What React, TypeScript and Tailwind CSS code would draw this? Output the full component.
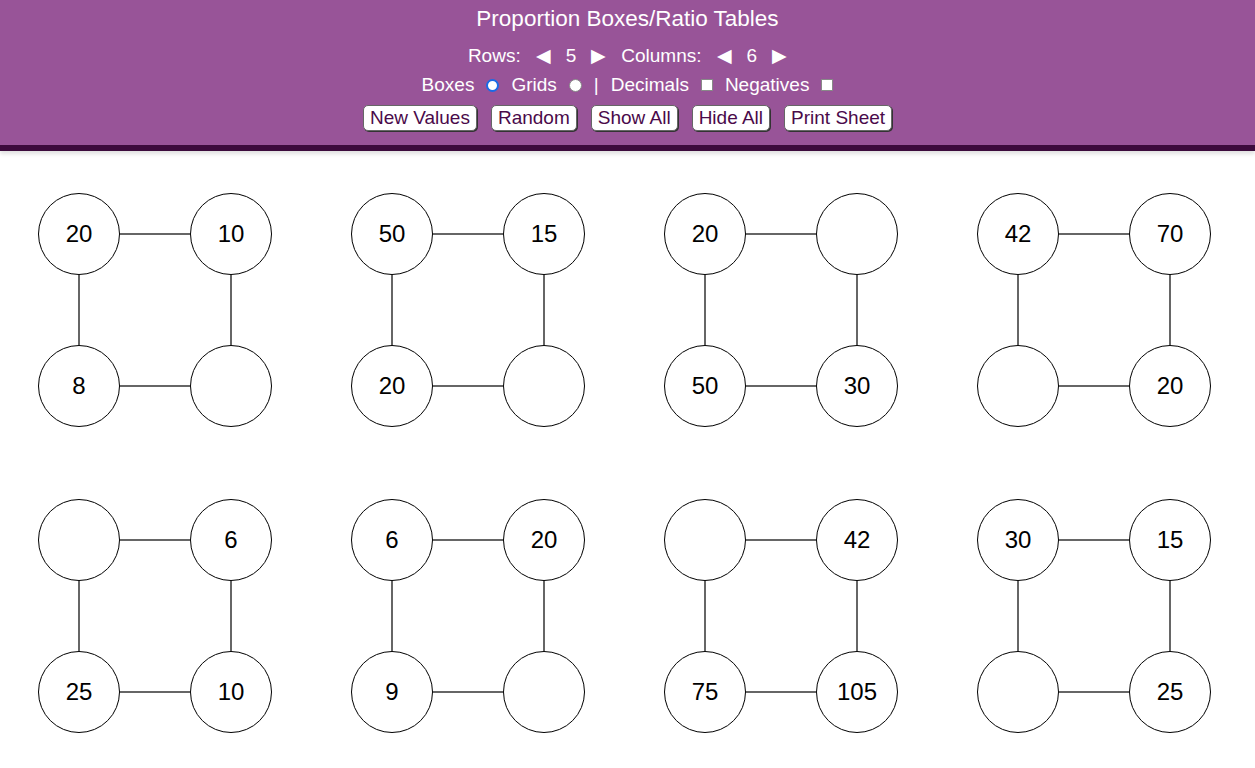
import React from 'react';

type Val = number | '';

const boxes: Val[][] = [
  [20, 10, 8, ''],
  [50, 15, 20, ''],
  [20, '', 50, 30],
  [42, 70, '', 20],
  ['', 6, 25, 10],
  [6, 20, 9, ''],
  ['', 42, 75, 105],
  [30, 15, '', 25],
];

const Circle = ({ v }: { v: Val }) => (
  <div className="w-[82px] h-[82px] rounded-full border border-black bg-white flex items-center justify-center text-[24px] text-black">
    {v}
  </div>
);

const HLine = () => (
  <div className="flex items-center">
    <div className="w-full h-[1.5px] bg-[#666]" />
  </div>
);

const VLine = () => (
  <div className="flex justify-center">
    <div className="h-full w-[1.5px] bg-[#666]" />
  </div>
);

const ProportionBox = ({ vals }: { vals: Val[] }) => (
  <div className="grid grid-cols-[82px_70px_82px] grid-rows-[82px_70px_82px]">
    <Circle v={vals[0]} />
    <HLine />
    <Circle v={vals[1]} />
    <VLine />
    <div />
    <VLine />
    <Circle v={vals[2]} />
    <HLine />
    <Circle v={vals[3]} />
  </div>
);

const Btn = ({ label }: { label: string }) => (
  <button className="h-[26px] px-[6px] bg-white rounded-[5px] border border-[#666] shadow-[1px_1px_0_#333] text-[#4a0a4a] text-[19px] leading-[22px]">
    {label}
  </button>
);

const App = () => {
  return (
    <div className="min-h-screen bg-white" style={{ fontFamily: '"Liberation Sans", Arial, sans-serif' }}>
      {/* Header / controls */}
      <div className="bg-[#985498] border-b-[6px] border-[#3c0b3c] shadow-[0_3px_4px_rgba(0,0,0,0.12)] text-white text-center pb-[14px]">
        <div className="pt-[6px] leading-[26px] text-[22.5px]">Proportion Boxes/Ratio Tables</div>
        <div className="mt-[10px] leading-[28px] text-[19px] flex justify-center items-center gap-[15px]">
          <span>Rows:</span>
          <span className="text-[19px]">◀</span>
          <span>5</span>
          <span className="text-[19px]">▶</span>
          <span>Columns:</span>
          <span className="text-[19px]">◀</span>
          <span>6</span>
          <span className="text-[19px]">▶</span>
        </div>
        <div className="mt-[1px] leading-[28px] text-[19px] flex justify-center items-center gap-[12px]">
          <span>Boxes</span>
          <span className="w-[13px] h-[13px] rounded-full border-[2px] border-[#1a6be6] bg-white" />
          <span>Grids</span>
          <span className="w-[13px] h-[13px] rounded-full border border-[#888] bg-white" />
          <span>|</span>
          <span>Decimals</span>
          <span className="w-[12px] h-[12px] border border-[#888] bg-white" />
          <span>Negatives</span>
          <span className="w-[12px] h-[12px] border border-[#888] bg-white" />
        </div>
        <div className="mt-[6px] flex justify-center gap-[14px]">
          <Btn label="New Values" />
          <Btn label="Random" />
          <Btn label="Show All" />
          <Btn label="Hide All" />
          <Btn label="Print Sheet" />
        </div>
      </div>

      {/* Boxes */}
      <div className="pl-[38px] pt-[42px] grid grid-cols-[repeat(4,234px)] gap-x-[79px] gap-y-[72px]">
        {boxes.map((b, i) => (
          <ProportionBox key={i} vals={b} />
        ))}
      </div>
    </div>
  );
};

export default App;
